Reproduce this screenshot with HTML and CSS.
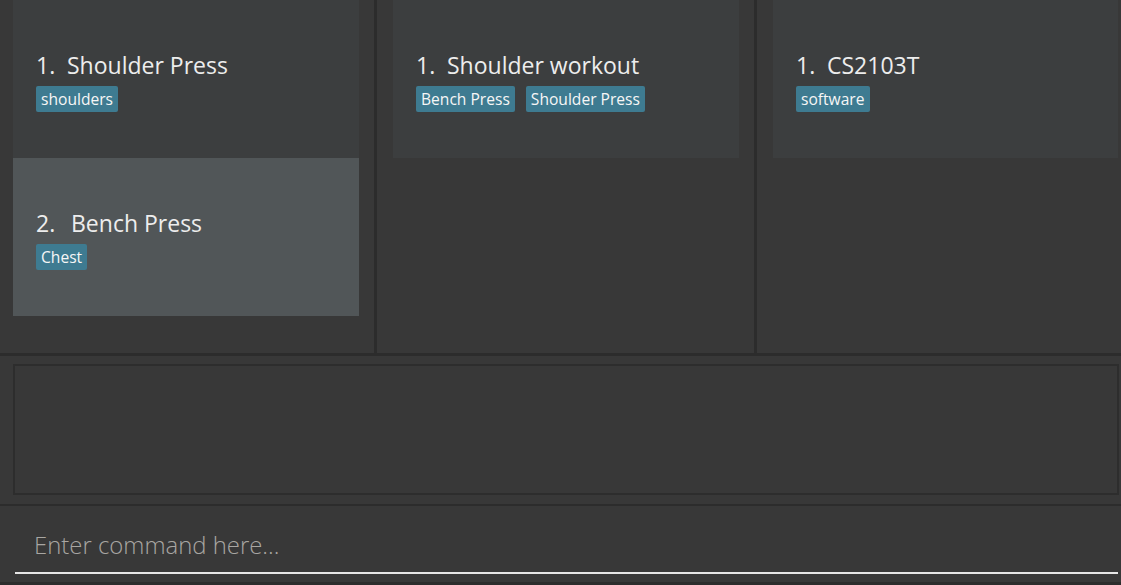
FILE: index.html
```html
<!DOCTYPE html>
<html lang="en">
<head>
<meta charset="utf-8">
<title>Workout Book</title>
<link rel="stylesheet" href="styles.css">
</head>
<body>
<div class="app">
  <div class="top">
    <div class="col col-1">
      <div class="card">
        <div class="title"><span class="num">1.</span><span class="name">Shoulder Press</span></div>
        <div class="tags"><span class="tag">shoulders</span></div>
      </div>
      <div class="card card-alt">
        <div class="title"><span class="num num-wide">2.</span><span class="name">Bench Press</span></div>
        <div class="tags"><span class="tag">Chest</span></div>
      </div>
    </div>
    <div class="col col-2">
      <div class="card">
        <div class="title"><span class="num">1.</span><span class="name">Shoulder workout</span></div>
        <div class="tags"><span class="tag">Bench Press</span><span class="tag">Shoulder Press</span></div>
      </div>
    </div>
    <div class="col col-3">
      <div class="card">
        <div class="title"><span class="num">1.</span><span class="name">CS2103T</span></div>
        <div class="tags"><span class="tag">software</span></div>
      </div>
    </div>
  </div>
  <div class="result-pane">
    <div class="result-box"></div>
  </div>
  <div class="command-pane">
    <div class="command-field">
      <span class="placeholder">Enter command here...</span>
    </div>
  </div>
</div>
</body>
</html>
```

FILE: styles.css
```css
* { box-sizing: border-box; }

html, body {
  margin: 0;
  padding: 0;
  background: #383838;
}

body {
  font-family: "Open Sans", "Noto Sans", sans-serif;
  color: #ececec;
  width: 1121px;
  height: 585px;
  overflow: hidden;
}

.app {
  display: flex;
  flex-direction: column;
  height: 585px;
}

.top {
  display: grid;
  grid-template-columns: 377px 380px 1fr;
  height: 356px;
  border-bottom: 3px solid #2c2c2c;
}

.col {
  border-right: 3px solid #2c2c2c;
  display: flex;
  flex-direction: column;
}

.col-1 { padding: 0 15px 0 13px; }
.col-2 { padding: 0 15px 0 16px; }
.col-3 { padding: 0 3px 0 16px; border-right: none; }

.card {
  height: 158px;
  background: #3c3e3f;
  padding: 50px 0 0 23px;
}

.card-alt {
  background: #515658;
}

.title {
  font-size: 23px;
  line-height: 31px;
  color: #ededed;
  display: flex;
  white-space: nowrap;
}

.num {
  width: 31px;
}

.num-wide {
  width: 35px;
}

.tags {
  display: flex;
  gap: 11px;
  margin-top: 5px;
}

.tag {
  background: #3e7b91;
  color: #f6f6f6;
  font-size: 15.6px;
  line-height: 20px;
  padding: 3px 5px;
  border-radius: 2px;
  white-space: nowrap;
}

.result-pane {
  height: 150px;
  padding: 8px 2px 0 13px;
  border-bottom: 2px solid #2c2c2c;
}

.result-box {
  height: 131px;
  border: 2px solid #2d2d2d;
  background: #383838;
}

.command-pane {
  height: 79px;
  padding: 0 3px 0 15px;
  border-bottom: 3px solid #2c2c2c;
}

.command-field {
  height: 68px;
  border-bottom: 2px solid #e6e6e6;
  padding: 15px 0 0 19px;
}

.placeholder {
  font-size: 23.9px;
  font-weight: 300;
  line-height: 48px;
  color: #a8a6a2;
  white-space: nowrap;
}
```
